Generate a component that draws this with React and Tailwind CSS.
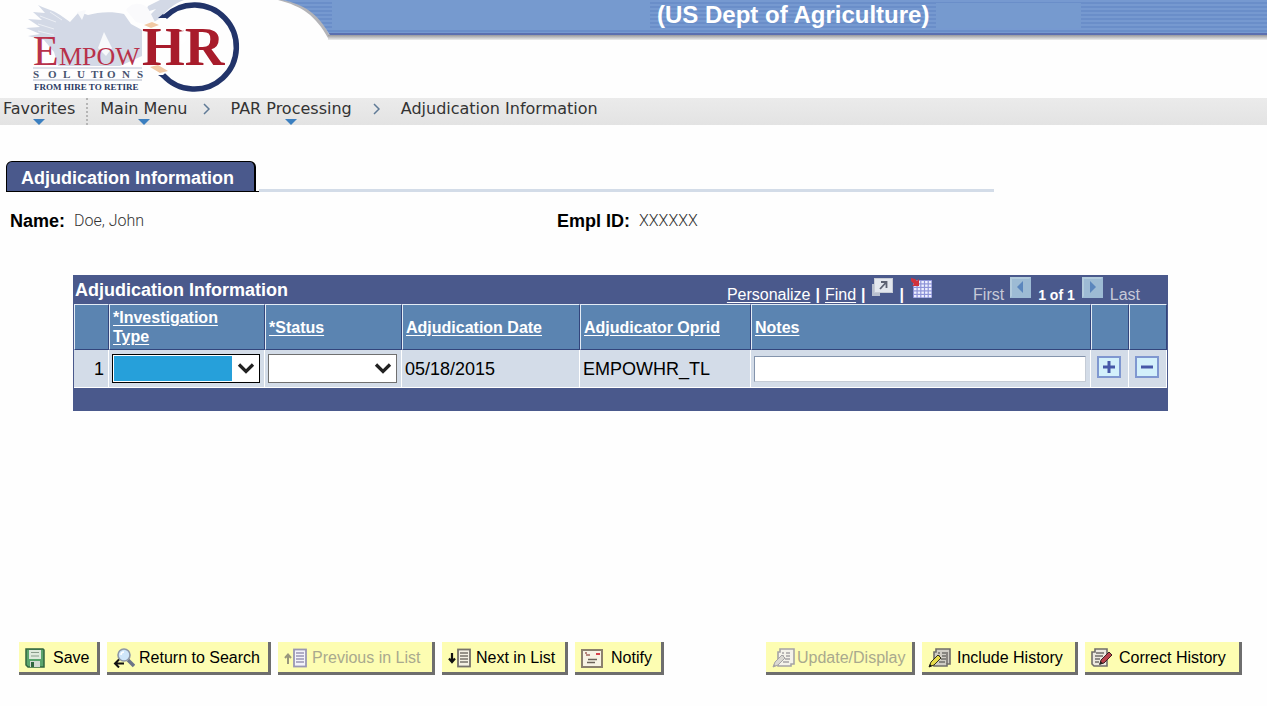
import { ChevronDown } from "lucide-react";

function Logo() {
  return (
    <svg viewBox="0 0 278 98" className="h-[98px] w-[278px] shrink-0" role="img" aria-label="EmpowHR Solutions, from hire to retire">
      <path
        d="M38 5 C46 9 56 11 63 17 L70 22 L79 12 L88 15 C98 12 112 11 124 14 L131 24 L142 30 V56 L120 66 H58 L54 52 L44 40 L28 36 L40 34 L26 28 L40 27 L28 19 L42 20 L33 12 L45 13 Z"
        fill="#d3d9e6"
      />
      <path d="M148 6 L160 0 H184 C174 4 166 10 162 17 L154 22 L150 15 L156 9 L146 12 Z" fill="#d3d9e6" />
      <path d="M40 16 L56 22 M38 24 L54 29 M38 31 L54 35 M50 12 L62 20" stroke="#eceff5" strokeWidth="1" />
      <path d="M126 10 C132 1 146 2 150 12 L155 22 L144 24 L136 22 Z" fill="#fafafc" />
      <path d="M104 32 L112 48 L106 56 L98 48 Z M77 12 L86 10 L82 20 Z" fill="#f8f9fb" />
      <path d="M165 17 A 42 42 0 1 1 163 75" fill="none" stroke="#22346a" strokeWidth="5.500" />
      <path d="M163 14 l-5 4 9 0 Z M158 75 l8 0 -2 4 Z" fill="#22346a" />
      <path d="M144 25 l8 -3 7 3 -8 3 Z M150 67 l8 -2 10 6 -8 2 Z" fill="#f1c9a4" />
      <g fontFamily="'Liberation Serif', serif">
        <text x="33" y="65" fontSize="42" fill="#b8314a">E</text>
        <text x="59" y="65" fontSize="26" fill="#b8314a">MPOW</text>
        <text x="142" y="65" fontSize="55" fontWeight="700" fill="#a81c2b">HR</text>
        <text x="33 48 63 77 91 99 107 122 137" y="78" fontSize="11" fontWeight="700" fill="#46536f">SOLUTIONS</text>
        <text x="34" y="90" fontSize="9" fontWeight="700" fill="#2b3a63">FROM HIRE TO RETIRE</text>
      </g>
      <path d="M176 28 l3 -6 3 5 4 -5 2 6 -5 3 Z M184 34 l2 6 -4 5 -2 -6 Z" fill="#ffffff" />
      <path d="M33 68 H142" stroke="#bcc3d4" strokeWidth="1" />
      <path d="M33 80 H142" stroke="#aab2c6" strokeWidth="1" />
    </svg>
  );
}

function Header() {
  return (
    <header className="flex h-[98px] overflow-hidden">
      <Logo />
      <svg viewBox="0 0 54 42" className="h-[42px] w-[54px] shrink-0" aria-hidden="true">
        <defs>
          <pattern id="lines" width="4" height="4" patternUnits="userSpaceOnUse">
            <rect width="4" height="4" fill="#7699d0" />
            <rect y="2" width="4" height="2" fill="#6a8ec9" />
          </pattern>
          <linearGradient id="edge" x1="0" y1="0" x2="0" y2="1">
            <stop offset="0" stopColor="#98989c" />
            <stop offset="1" stopColor="#efefef" />
          </linearGradient>
        </defs>
        <path d="M0 0 C24 6 38 16 50 38 H54 V34 H51 C40 12 26 3 6 0 Z" fill="#b4b4b8" />
        <path d="M4 0 C26 4 40 14 51 34 H54 V0 Z" fill="url(#lines)" />
        <path d="M51 33 H54 V35 H52 Z" fill="#5b6fb0" />
        <rect x="50" y="35" width="4" height="5" fill="url(#edge)" />
      </svg>
      <div className="min-w-0 flex-1">
        <div className="flex h-[33px] items-start bg-[repeating-linear-gradient(#7699d0_0px,#7699d0_2px,#6a8ec9_2px,#6a8ec9_4px)]">
          <div className="h-[30px] w-[318px] bg-[#769acf]" />
          <h1 className="px-[7px] font-['Liberation_Sans',sans-serif] text-[24px] leading-[30px] font-bold whitespace-nowrap text-white">
            (US Dept of Agriculture)
          </h1>
          <div className="mt-[3px] h-[25px] w-[145px] bg-[#769acf]" />
        </div>
        <div className="h-[2px] bg-[#5b6fb0]" />
        <div className="h-[5px] bg-linear-to-b from-[#98989c] to-[#efefef]" />
      </div>
    </header>
  );
}

function CrumbMenu({ label }) {
  return (
    <a href="#" className="relative leading-[22px]">
      {label}
      <svg viewBox="0 0 12 6" className="absolute top-[21px] left-1/2 h-[6px] w-[12px] -translate-x-1/2" aria-hidden="true">
        <path d="M0 0 H12 L6 6 Z" fill="#3b7fc0" />
      </svg>
    </a>
  );
}

function CrumbArrow() {
  return (
    <svg viewBox="0 0 7 12" className="h-[12px] w-[7px]" aria-hidden="true">
      <path d="M1 1 L6 6 L1 11" fill="none" stroke="#5f7a96" strokeWidth="1.500" />
    </svg>
  );
}

function Breadcrumbs() {
  return (
    <nav className="flex h-[27px] items-start bg-linear-to-b from-[#ebebeb] to-[#e3e3e3] pl-[3px] font-['DejaVu_Sans',sans-serif] text-[16px] whitespace-nowrap text-[#333]">
      <CrumbMenu label="Favorites" />
      <span className="mr-[12px] ml-[11px] h-[27px] border-l-2 border-dotted border-[#b5b5b5]" />
      <CrumbMenu label="Main Menu" />
      <span className="flex h-[22px] w-[43px] items-center pl-[15px]"><CrumbArrow /></span>
      <CrumbMenu label="PAR Processing" />
      <span className="flex h-[22px] w-[49px] items-center pl-[21px]"><CrumbArrow /></span>
      <span className="leading-[22px]">Adjudication Information</span>
    </nav>
  );
}

function PopupIcon() {
  return (
    <svg viewBox="0 0 22 20" className="h-[20px] w-[22px]" aria-hidden="true">
      <path d="M1 7 H6 V15 H9 V19 H1 Z" fill="#b9c0cf" />
      <rect x="3.500" y="1.500" width="18" height="14" fill="#e3e7ee" stroke="#c7ccd6" />
      <path d="M9 12 L15 5.500 M10 5 H15.500 V11" fill="none" stroke="#5c6272" strokeWidth="1.800" />
    </svg>
  );
}

function GridIcon() {
  const steps = [0, 1, 2, 3, 4];
  return (
    <svg viewBox="0 0 21 21" className="h-[21px] w-[21px]" aria-hidden="true">
      <rect x="2" y="2" width="19" height="18" fill="#8d93d8" />
      {steps.map((r) =>
        steps.map((c) => <rect key={`${r}${c}`} x={3 + c * 3.7} y={3 + r * 3.5} width="2.500" height="2.300" fill="#eef0ff" />)
      )}
      <path d="M0 0 L4 1 L6 3 L8 1 V8 H1 L3 6 L0 3 Z" fill="#d0323c" />
    </svg>
  );
}

function PageArrow({ back }) {
  return (
    <svg viewBox="0 0 21 21" className="h-[21px] w-[21px]" aria-hidden="true">
      <rect width="21" height="21" fill="#9dbbd4" />
      <path d="M0 0 H21 L19 2 H2 V19 L0 21 Z" fill="#b2cbdc" />
      <path d={back ? "M13 4 V16 L7 10 Z" : "M8 4 V16 L14 10 Z"} fill="#5b86bd" />
    </svg>
  );
}

function GridToolbar() {
  return (
    <div className="flex h-[29px] items-start justify-between bg-[#4a598c] pr-[28px] pl-[2px] text-white">
      <h2 className="text-[18px] leading-[30px] font-bold">Adjudication Information</h2>
      <div className="flex text-[16px] leading-[20px]">
        <a href="#" className="mt-[10px] underline underline-offset-2">Personalize</a>
        <span className="mt-[10px] px-[5px] font-bold">|</span>
        <a href="#" className="mt-[10px] underline underline-offset-2">Find</a>
        <span className="mt-[10px] px-[5px] font-bold">|</span>
        <button type="button" aria-label="View all in a new window" className="mt-[2px] h-[20px]"><PopupIcon /></button>
        <span className="mt-[10px] px-[7px] font-bold">|</span>
        <button type="button" aria-label="Download" className="mt-[3px] h-[21px]"><GridIcon /></button>
        <span className="mt-[10px] mr-[6px] ml-[41px] text-[#c6c9d8]">First</span>
        <button type="button" aria-label="Previous row" className="mt-[2px] h-[21px]"><PageArrow back /></button>
        <span className="mt-[10px] px-[7px] text-[14px] font-bold">1 of 1</span>
        <button type="button" aria-label="Next row" className="mt-[2px] h-[21px]"><PageArrow /></button>
        <span className="mt-[10px] ml-[7px] text-[#c6c9d8]">Last</span>
      </div>
    </div>
  );
}

const headCell = "border-t border-r border-b border-l border-t-[#e4ecf5] border-r-[#33457c] border-b-[#33457c] border-l-[#e4ecf5] px-[3px] text-left align-middle";
const bodyCell = "border-r border-b border-white px-[3px]";

function Picker({ label, active }) {
  return (
    <div className="relative flex">
      <select
        aria-label={label}
        className={
          active
            ? "h-[29px] w-full appearance-none border border-black bg-white"
            : "h-[29px] w-full appearance-none border border-[#707070] bg-white"
        }
      >
        <option></option>
      </select>
      {active && <span className="pointer-events-none absolute inset-y-[2px] right-[28px] left-[2px] bg-[#26a0da]" />}
      <ChevronDown className="pointer-events-none absolute top-0 right-0 h-[28px] w-[28px] text-[#222]" strokeWidth={2.8} strokeLinecap="butt" strokeLinejoin="miter" />
    </div>
  );
}

function RowButton({ label, plus }) {
  return (
    <button type="button" aria-label={label} className="block h-[22px] w-[24px]">
      <svg viewBox="0 0 24 22" className="h-[22px] w-[24px]" aria-hidden="true">
        <rect x="1" y="1" width="22" height="20" fill="#d3f0fb" stroke="#7f97d0" strokeWidth="2" />
        <path d={plus ? "M6 11 H18 M12 5 V17" : "M6 11 H18"} stroke="#4658a8" strokeWidth="3" />
      </svg>
    </button>
  );
}

function Grid() {
  return (
    <section className="mt-[43px] mr-[99px] ml-[73px]">
      <GridToolbar />
      <div className="bg-[#4a598c] px-px pb-[23px]">
        <table className="w-full table-fixed border-separate border-spacing-0">
          <colgroup>
            <col className="w-[35px]" />
            <col className="w-[156px]" />
            <col className="w-[137px]" />
            <col className="w-[178px]" />
            <col className="w-[171px]" />
            <col />
            <col className="w-[38px]" />
            <col className="w-[38px]" />
          </colgroup>
          <thead>
            <tr className="h-[46px] bg-[#5b84b1] text-[16px] leading-[19px] font-bold text-white">
              <th className={headCell} aria-label="Row" />
              <th className={headCell}><a href="#" className="underline underline-offset-2">*Investigation<br />Type</a></th>
              <th className={headCell}><a href="#" className="underline underline-offset-2">*Status</a></th>
              <th className={headCell}><a href="#" className="underline underline-offset-2">Adjudication Date</a></th>
              <th className={headCell}><a href="#" className="underline underline-offset-2">Adjudicator Oprid</a></th>
              <th className={headCell}><a href="#" className="underline underline-offset-2">Notes</a></th>
              <th className={headCell} aria-label="Add" />
              <th className={headCell} aria-label="Delete" />
            </tr>
          </thead>
          <tbody>
            <tr className="h-[38px] bg-[#d3dce8] text-[18px] leading-[20px] text-black">
              <td className="border-r border-b border-white pr-[4px] text-right">1</td>
              <td className="border-r border-b border-white pr-[4px] pl-[3px]"><Picker label="Investigation Type" active /></td>
              <td className="border-r border-b border-white pr-[4px] pl-[3px]"><Picker label="Status" /></td>
              <td className={bodyCell}>05/18/2015</td>
              <td className={bodyCell}>EMPOWHR_TL</td>
              <td className="border-r border-b border-white pr-[4px] pl-[3px]">
                <input type="text" aria-label="Notes" className="block h-[26px] w-full border border-t-[#8494ac] border-r-[#c5ccd6] border-b-[#c5ccd6] border-l-[#8494ac] bg-white px-1" />
              </td>
              <td className="border-r border-b border-white pb-[4px] pl-[6px]"><RowButton label="Add row" plus /></td>
              <td className="border-r border-b border-white pb-[4px] pl-[6px]"><RowButton label="Delete row" /></td>
            </tr>
          </tbody>
        </table>
      </div>
    </section>
  );
}

function SaveIcon() {
  return (
    <svg viewBox="0 0 20 20" className="h-[20px] w-[20px]" aria-hidden="true">
      <path d="M1 1 H18 L19 2 V19 H3 L1 17 Z" fill="#5ba56d" stroke="#32663f" strokeWidth="1.500" />
      <rect x="4" y="2" width="12" height="9" fill="#dfe9dc" />
      <path d="M6 4.500 H14 M6 8 H14" stroke="#8b9c8b" strokeWidth="1.200" />
      <rect x="5" y="13" width="10" height="6" fill="#d5dbd2" />
      <rect x="6" y="14" width="3" height="5" fill="#32663f" />
    </svg>
  );
}

function SearchIcon() {
  return (
    <svg viewBox="0 0 22 20" className="h-[20px] w-[22px]" aria-hidden="true">
      <path d="M15 12 L21 18" stroke="#6c7488" strokeWidth="3.500" />
      <circle cx="11" cy="7" r="6" fill="#cfe6fa" stroke="#8d97a7" strokeWidth="1.600" />
      <path d="M8 7 a3 3 0 0 1 3 -3" stroke="#fff" strokeWidth="1.500" fill="none" />
      <path d="M11 15.500 H3 M6 11.500 L2 15.500 L6 19.500" fill="none" stroke="#111" strokeWidth="2" />
    </svg>
  );
}

function ListIcon({ up }) {
  const page = up ? "#9a97b4" : "#77736b";
  return (
    <svg viewBox="0 0 24 20" className="h-[20px] w-[24px]" aria-hidden="true">
      <rect x="10" y="1.500" width="12" height="17" fill={up ? "#f3f3fa" : "#f4f1e4"} stroke={page} strokeWidth="1.800" />
      <path d="M12 5 H20 M12 8 H20 M12 11 H20 M12 14 H20" stroke={page} strokeWidth="1.400" />
      {up ? (
        <path d="M4 16 V7 M1 10 L4 6.500 L7 10" fill="none" stroke="#99977c" strokeWidth="2" />
      ) : (
        <path d="M4 5 V13 M1 10.500 L4 14 L7 10.500" fill="none" stroke="#111" strokeWidth="2.200" />
      )}
    </svg>
  );
}

function NotifyIcon() {
  return (
    <svg viewBox="0 0 22 19" className="h-[19px] w-[22px]" aria-hidden="true">
      <rect x="1" y="1" width="20" height="17" fill="#f8f3e4" stroke="#8b806e" strokeWidth="2" />
      <path d="M4 4 H6 M5 6 H9" stroke="#a0655c" strokeWidth="1.500" />
      <rect x="15" y="4" width="4" height="2" fill="#d8434b" />
      <path d="M7 10.500 H16 M6 13.500 H14" stroke="#6c6359" strokeWidth="1.500" />
    </svg>
  );
}

function PageEditIcon({ kind }) {
  const ink = kind === "update" ? "#a5a3a5" : "#706d6a";
  if (kind === "correct") {
    return (
      <svg viewBox="0 0 22 20" className="h-[20px] w-[22px]" aria-hidden="true">
        <path d="M4 1 H16 V18 H3 L1 16 V4 H4 Z" fill="#ece8df" stroke={ink} strokeWidth="1.600" />
        <path d="M5 5 H13 M4 8 H12 M4 11 H9 M4 14 H8" stroke={ink} strokeWidth="1.300" />
        <path d="M9 16 L10 12 L18 4 L21 7 L13 15 Z" fill="#b8424d" stroke="#3c2023" />
        <path d="M8 17 L9.500 13 L12 15.500 Z" fill="#222" />
      </svg>
    );
  }
  return (
    <svg viewBox="0 0 23 20" className="h-[20px] w-[23px]" aria-hidden="true">
      <path d="M8 1 H22 V16 H19 V18 H6 V4 H8 Z" fill={kind === "update" ? "#f4f2ea" : "#cfccc4"} stroke={ink} strokeWidth="1.600" />
      {kind === "include" && <path d="M19 4 V16" stroke={ink} strokeWidth="1.500" />}
      <path d="M10 5 H12 M14 5 H18 M10 8 H12 M14 8 H18 M13 11 H18 M11 14 H17" stroke={ink} strokeWidth="1.400" />
      <path d="M1 19 L3 14 L10 7 L13 10 L6 17 Z" fill={kind === "update" ? "#dad8d2" : "#e8dc4a"} stroke={kind === "update" ? "#a5a3a5" : "#33301c"} />
      <path d="M1 19 L2 16 L4 18 Z" fill={kind === "update" ? "#a5a3a5" : "#111"} />
    </svg>
  );
}

function ActionButton({ icon, children, disabled, size }) {
  return (
    <button
      type="button"
      disabled={disabled}
      className={`${size} flex h-[33px] items-center border-r-[3px] border-b-[3px] border-[#6e6e6e] bg-[#fdfdb2] pt-[2px] pl-[6px] text-[16px] leading-[20px] whitespace-nowrap text-black disabled:text-[#a9a98e]`}
    >
      {icon}
      <span>{children}</span>
    </button>
  );
}

export default function App() {
  return (
    <div className="min-h-screen bg-[#fefefe] pb-[31px] font-['Liberation_Sans',Arial,sans-serif]">
      <Header />
      <Breadcrumbs />
      <main>
        <div className="mt-[36px] mr-[273px] ml-[6px] flex items-end">
          <a href="#" className="h-[31px] w-[250px] rounded-t-[6px] border border-r-2 border-black bg-[#4a598c] pl-[14px] text-[18px] leading-[32px] font-bold whitespace-nowrap text-white">
            Adjudication Information
          </a>
          <span className="h-px w-[3px] bg-black" />
          <span className="h-[3px] flex-1 bg-[#d3dce8]" />
        </div>
        <dl className="mt-[18px] flex pl-[10px] text-[18px] leading-[22px] text-black">
          <div className="flex w-[547px] gap-[9px]">
            <dt className="font-bold">Name:</dt>
            <dd className="font-[Roboto,sans-serif] text-[16px] font-light text-[#333]">Doe, John</dd>
          </div>
          <div className="flex gap-[9px]">
            <dt className="font-bold">Empl ID:</dt>
            <dd className="font-[Roboto,sans-serif] text-[16px] font-light text-[#333]">XXXXXX</dd>
          </div>
        </dl>
        <Grid />
      </main>
      <footer className="mt-[231px] flex justify-between pr-[25px] pl-[19px]">
        <div className="flex gap-[7px]">
          <ActionButton size="w-[81px] gap-[8px]" icon={<SaveIcon />}>Save</ActionButton>
          <ActionButton size="w-[164px] gap-[4px]" icon={<SearchIcon />}>Return to Search</ActionButton>
          <ActionButton size="w-[157px] gap-[4px]" icon={<ListIcon up />} disabled>Previous in List</ActionButton>
          <ActionButton size="w-[126px] gap-[4px]" icon={<ListIcon />}>Next in List</ActionButton>
          <ActionButton size="w-[89px] gap-[8px]" icon={<NotifyIcon />}>Notify</ActionButton>
        </div>
        <div className="flex gap-[7px]">
          <ActionButton size="w-[149px] gap-[2px]" icon={<PageEditIcon kind="update" />} disabled>Update/Display</ActionButton>
          <ActionButton size="w-[156px] gap-[6px]" icon={<PageEditIcon kind="include" />}>Include History</ActionButton>
          <ActionButton size="w-[157px] gap-[6px]" icon={<PageEditIcon kind="correct" />}>Correct History</ActionButton>
        </div>
      </footer>
    </div>
  );
}
